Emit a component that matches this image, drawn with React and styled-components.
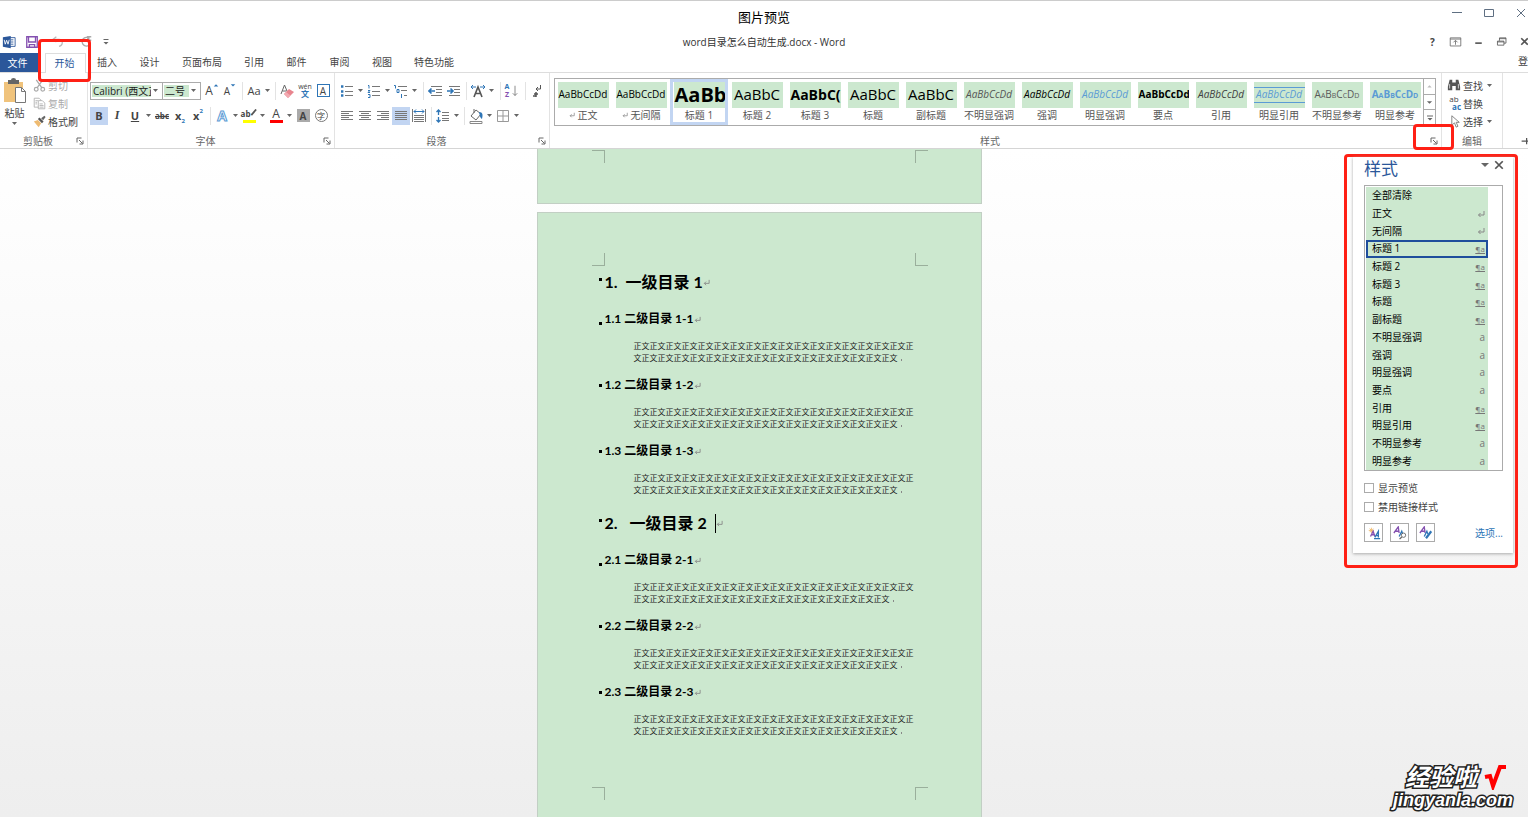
import styled, { createGlobalStyle, css } from "styled-components";

const GlobalStyle = createGlobalStyle`
  * {
    box-sizing: border-box;
  }

  html, body, #root {
    height: 100%;
  }

  body {
    margin: 0;
    overflow: hidden;
    font-family: "Open Sans", "Noto Sans CJK SC", sans-serif;
    font-size: 10px;
    color: #444;
  }

  button, input {
    font: inherit;
    color: inherit;
    padding: 0;
    margin: 0;
    border: 0;
    background: none;
  }

  p, h1, h2, h3, ul {
    margin: 0;
    padding: 0;
    font-weight: normal;
  }

  svg {
    display: block;
    flex: none;
  }
`;

const tabs = [
  { name: "插入", width: 42 },
  { name: "设计", width: 43 },
  { name: "页面布局", width: 62 },
  { name: "引用", width: 42 },
  { name: "邮件", width: 43 },
  { name: "审阅", width: 43 },
  { name: "视图", width: 42 },
  { name: "特色功能", width: 62 },
];

const gallery = [
  { name: "正文", mark: true },
  { name: "无间隔", mark: true },
  { name: "标题 1", text: "AaBb", size: 20, bold: true, selected: true },
  { name: "标题 2", text: "AaBbC", size: 15 },
  { name: "标题 3", text: "AaBbC(", size: 14, bold: true },
  { name: "标题", text: "AaBbC", size: 15 },
  { name: "副标题", text: "AaBbC", size: 15 },
  { name: "不明显强调", italic: true, color: "#555" },
  { name: "强调", italic: true },
  { name: "明显强调", italic: true, color: "#5b9bd5" },
  { name: "要点", bold: true },
  { name: "引用", italic: true, color: "#404040" },
  { name: "明显引用", italic: true, color: "#5b9bd5", lined: true },
  { name: "不明显参考", caps: true, color: "#5a5a5a" },
  { name: "明显参考", caps: true, bold: true, color: "#5b9bd5" },
];

const styleList = [
  ["全部清除", ""],
  ["正文", "return"],
  ["无间隔", "return"],
  ["标题 1", "linked"],
  ["标题 2", "linked"],
  ["标题 3", "linked"],
  ["标题", "linked"],
  ["副标题", "linked"],
  ["不明显强调", "a"],
  ["强调", "a"],
  ["明显强调", "a"],
  ["要点", "a"],
  ["引用", "linked"],
  ["明显引用", "linked"],
  ["不明显参考", "a"],
  ["明显参考", "a"],
];

const bodyText = ["正文".repeat(17) + "正", "文" + "正文".repeat(16)];
const bodyTextAlt = ["正文正" + "正文".repeat(16), "正文".repeat(16)];

const chapters = [
  {
    number: "1.",
    title: "一级目录 1",
    sections: [
      { title: "1.1 二级目录 1-1", lines: bodyText, low: true },
      { title: "1.2 二级目录 1-2", lines: bodyText },
      { title: "1.3 二级目录 1-3", lines: bodyText },
    ],
  },
  {
    number: "2.",
    title: "一级目录 2",
    wide: true,
    sections: [
      { title: "2.1 二级目录 2-1", lines: bodyTextAlt, low: true },
      { title: "2.2 二级目录 2-2", lines: bodyText },
      { title: "2.3 二级目录 2-3", lines: bodyText },
    ],
  },
];

const Icon = ({ size = 16, children, ...rest }) => (
  <svg
    width={size}
    height={size}
    viewBox="0 0 16 16"
    fill="none"
    stroke="#666"
    aria-hidden="true"
    {...rest}
  >
    {children}
  </svg>
);

const ReturnMark = ({ size = 7, color = "#888" }) => (
  <svg width={size} height={size} viewBox="0 0 8 8" fill="none" stroke={color} aria-hidden="true">
    <path d="M7 1v4H1.5M3.5 3l-2 2 2 2" />
  </svg>
);

const Down = ({ label }) => (
  <CaretButton aria-label={label}>
    <svg width="5" height="3" viewBox="0 0 5 3" aria-hidden="true">
      <path d="M0 0h5L2.5 3z" fill="#666" />
    </svg>
  </CaretButton>
);

const LinesIcon = ({ rows }) => (
  <Icon>
    {rows.map(([x, w], i) => (
      <path key={i} d={`M${x} ${3.5 + i * 2}h${w}`} stroke="#777" />
    ))}
  </Icon>
);

const ListIcon = ({ kind }) => (
  <Icon>
    <path
      d={kind === "multi" ? "M5 3.5h9M8 7.5h6M11 12.5h3" : "M6 3.5h8M6 8.5h8M6 12.5h8"}
      stroke="#777"
    />
    {kind === "bullet" && <path d="M2 3.5h2.4M2 8.5h2.4M2 12.5h2.4" stroke="#2e75b6" strokeWidth="2.4" />}
    {kind === "number" && (
      <path d="M2 2.5h1v3M2 7.5h2l-2 2h2M2 11.5h2v3H2" stroke="#2e75b6" />
    )}
    {kind === "multi" && (
      <path d="M1 2.5h1.5v3M4 6.5h2v3H4zM8.5 11v4" stroke="#2e75b6" />
    )}
  </Icon>
);

const IndentIcon = ({ right }) => (
  <Icon>
    <path d="M3 3.5h11M8 6.5h6M8 9.5h6M3 12.5h11" stroke="#777" />
    <path
      d={right ? "M1 8h6M4.5 5.5L7 8l-2.5 2.5" : "M7 8H1M3.5 5.5L1 8l2.5 2.5"}
      stroke="#2e75b6"
      strokeWidth="1.6"
    />
  </Icon>
);

const TitleBar = () => (
  <header>
    <PreviewBar>
      <span />
      <PreviewTitle>图片预览</PreviewTitle>
      <PreviewControls>
        <WindowButton aria-label="最小化">
          <Icon stroke="#5f6f82"><path d="M3 7.5h10" /></Icon>
        </WindowButton>
        <WindowButton aria-label="最大化">
          <Icon stroke="#5f6f82"><path d="M3.5 4.5h9v7h-9z" /></Icon>
        </WindowButton>
        <WindowButton aria-label="关闭">
          <Icon stroke="#5f6f82"><path d="M4 4l8 8M12 4l-8 8" /></Icon>
        </WindowButton>
      </PreviewControls>
    </PreviewBar>
    <QuickBar>
      <QuickTools>
        <Icon size={14} stroke="none">
          <path d="M8 3h7v10H8z" fill="#fff" stroke="#2b579a" />
          <path d="M10 5.500h3M10 8h3M10 10.500h3" stroke="#2b579a" />
          <path d="M1 2.500L10 1v14l-9-1.500z" fill="#2b579a" />
          <path d="M2.500 5.500l1.200 5 1.600-4.500 1.600 4.500L8.200 5.500" fill="none" stroke="#fff" />
        </Icon>
        <QuickButton aria-label="保存">
          <Icon size={14} stroke="#8450b0" strokeWidth="1.500">
            <path d="M2 2h12v12H2z" />
            <path d="M4 2v6h8V2M5 14v-3h6v3" />
          </Icon>
        </QuickButton>
        <QuickButton aria-label="撤消">
          <Icon size={14} stroke="#bbb" strokeWidth="1.500">
            <path d="M5 2L1 5l4 3M1 5h7c5 0 5 7 0 8" />
          </Icon>
        </QuickButton>
        <QuickButton aria-label="重复">
          <Icon size={14} stroke="#aaa" strokeWidth="1.500">
            <path d="M12 4a5 5 0 1 0 1 6M9 2h5M10 1v5h4" />
          </Icon>
        </QuickButton>
        <QuickButton aria-label="自定义快速访问工具栏" $narrow>
          <Icon size={8}><path d="M3 3h10" strokeWidth="2" /><path d="M3 8h10l-5 5z" fill="#666" stroke="none" /></Icon>
        </QuickButton>
      </QuickTools>
      <DocTitle>word目录怎么自动生成.docx - Word</DocTitle>
      <WordControls>
        <WindowButton $small aria-label="帮助"><b>?</b></WindowButton>
        <WindowButton $small aria-label="功能区显示选项">
          <Icon size={13}><path d="M1.500 3.500h13v10h-13zM1.500 5h13M8 12V7M5.500 9L8 6.500 10.500 9" /></Icon>
        </WindowButton>
        <WindowButton $small aria-label="最小化">
          <Icon size={13} stroke="#555"><path d="M4 10h8" strokeWidth="2" /></Icon>
        </WindowButton>
        <WindowButton $small aria-label="还原">
          <Icon size={13} stroke="#555"><path d="M3 7.500h8v5H3zM3 8.500h8M5.500 7V3.500h8V10H11M5.500 4.500h8" /></Icon>
        </WindowButton>
        <WindowButton $small aria-label="关闭文档">
          <Icon size={13} stroke="#555"><path d="M4 4l8 8M12 4l-8 8" strokeWidth="2" /></Icon>
        </WindowButton>
      </WordControls>
    </QuickBar>
    <TabBar>
      <FileTab>文件</FileTab>
      <ActiveTab>
        开始
        <TabHighlight />
      </ActiveTab>
      {tabs.map((tab) => (
        <Tab key={tab.name} $width={tab.width}>{tab.name}</Tab>
      ))}
      <SignIn href="#login">登录</SignIn>
    </TabBar>
  </header>
);

const GroupFooter = ({ name, marked }) => (
  <Footer>
    <span>{name}</span>
    <Launcher aria-label={`${name}设置`}>
      <Icon size={8} strokeWidth="2">
        <path d="M2 11V2h9M6 6l7 7M14 7v7H7" />
      </Icon>
      {marked && <LauncherHighlight />}
    </Launcher>
  </Footer>
);

const ClipboardGroup = () => (
  <Group $width={88}>
    <ClipboardBody>
      <PasteButton>
        <svg width="24" height="26" viewBox="0 0 24 26" fill="none" aria-hidden="true">
          <path d="M1 4h19v20H1z" fill="#f0c37c" />
          <path d="M5 2h3a2.500 2 0 0 1 5 0h3v4H5z" fill="#666" />
          <path d="M12.500 9.500h6l4 4v11h-10z" fill="#fff" stroke="#777" />
          <path d="M18.500 9.500v4h4" stroke="#777" />
        </svg>
        粘贴
        <svg width="5" height="3" viewBox="0 0 5 3" aria-hidden="true"><path d="M0 0h5L2.500 3z" fill="#666" /></svg>
      </PasteButton>
      <Stack>
        <StackButton $muted>
          <Icon size={13} stroke="#aaa" strokeWidth="1.500">
            <path d="M4 1l7 10M12 1L5 11" />
            <circle cx="4" cy="12.500" r="2.300" />
            <circle cx="12" cy="12.500" r="2.300" />
          </Icon>
          剪切
        </StackButton>
        <StackButton $muted>
          <Icon size={13} stroke="#aaa">
            <path d="M6.500 12.500h-5v-11h6l2 2v1" />
            <path d="M6.500 4.500h5l3 3v7h-8zM8 8.500h4M8 10.500h5M8 12.500h5M3 4.500h3M3 6.500h2M3 8.500h2" />
          </Icon>
          复制
        </StackButton>
        <StackButton>
          <Icon size={13} stroke="none">
            <path d="M1 8l5-2 4 4-3 5z" fill="#eebb72" />
            <path d="M6 5l2-2 5 5-2 2z" fill="#555" />
            <path d="M10 4l4-3 1.500 1.500-3 4z" fill="#666" />
          </Icon>
          格式刷
        </StackButton>
      </Stack>
    </ClipboardBody>
    <GroupFooter name="剪贴板" />
  </Group>
);

const FontGroup = () => (
  <Group $width={247}>
    <ToolRow>
      <Combo $width={73}>
        <input aria-label="字体" defaultValue="Calibri (西文正文)" />
        <Down label="选择字体" />
      </Combo>
      <Combo $width={38} $last>
        <input aria-label="字号" defaultValue="二号" />
        <Down label="选择字号" />
      </Combo>
      <Tool aria-label="增大字号">
        <Letter $size={12}>A</Letter>
        <Icon size={6} stroke="none"><path d="M2 12l6-6 6 6z" fill="#2e75b6" /></Icon>
      </Tool>
      <Tool aria-label="减小字号">
        <Letter $size={10}>A</Letter>
        <Icon size={6} stroke="none"><path d="M2 6l6 6 6-6z" fill="#2e75b6" /></Icon>
      </Tool>
      <Separator />
      <Tool aria-label="更改大小写"><Letter $size={11}>Aa</Letter></Tool>
      <Down label="大小写选项" />
      <Separator />
      <Tool aria-label="清除格式">
        <Icon>
          <path d="M2 11L5.500 2 8 8M3.500 8h4" stroke="#666" />
          <path d="M5 11l5-5 5 3-6 6z" fill="#e8848e" stroke="none" />
          <path d="M5 11l2-2 4.500 3.500L9 15z" fill="#f3aab1" stroke="none" />
        </Icon>
      </Tool>
      <Tool aria-label="拼音指南"><Pinyin>wén<b>文</b></Pinyin></Tool>
      <Tool aria-label="字符边框"><BoxedLetter>A</BoxedLetter></Tool>
    </ToolRow>
    <ToolRow>
      <Tool $on aria-label="加粗"><Letter $size={11} $bold>B</Letter></Tool>
      <Tool aria-label="倾斜"><Letter $size={12} $serif $bold><i>I</i></Letter></Tool>
      <Tool aria-label="下划线"><Letter $size={11} $bold><u>U</u></Letter></Tool>
      <Down label="下划线样式" />
      <Tool aria-label="删除线"><Letter $size={8} $bold><s>abc</s></Letter></Tool>
      <Tool aria-label="下标"><Letter $size={11} $bold>x</Letter><Script $low>2</Script></Tool>
      <Tool aria-label="上标"><Letter $size={11} $bold>x</Letter><Script>2</Script></Tool>
      <Separator />
      <Tool aria-label="文本效果"><OutlineLetter>A</OutlineLetter></Tool>
      <Down label="文本效果选项" />
      <Tool aria-label="突出显示"><Barred $color="#ffff00" $small>ab<Icon size={7} stroke="#555" strokeWidth="4"><path d="M14 1L3 14" /></Icon></Barred></Tool>
      <Down label="突出显示颜色" />
      <Tool aria-label="字体颜色"><Barred $color="#ff0000">A</Barred></Tool>
      <Down label="选择字体颜色" />
      <Tool aria-label="字符底纹"><BoxedLetter $shade>A</BoxedLetter></Tool>
      <Tool aria-label="带圈字符"><BoxedLetter $round>字</BoxedLetter></Tool>
    </ToolRow>
    <GroupFooter name="字体" />
  </Group>
);

const full = [[2, 12], [2, 12], [2, 12], [2, 12], [2, 12]];

const ParagraphGroup = () => (
  <Group $width={215}>
    <ToolRow $indent>
      <Tool aria-label="项目符号"><ListIcon kind="bullet" /></Tool>
      <Down label="项目符号选项" />
      <Tool aria-label="编号"><ListIcon kind="number" /></Tool>
      <Down label="编号选项" />
      <Tool aria-label="多级列表"><ListIcon kind="multi" /></Tool>
      <Down label="多级列表选项" />
      <Separator $wide />
      <Tool aria-label="减少缩进量"><IndentIcon /></Tool>
      <Tool aria-label="增加缩进量"><IndentIcon right /></Tool>
      <Separator />
      <Tool aria-label="中文版式">
        <Icon>
          <path d="M4 14L8 4l4 10M5.500 10.500h5" stroke="#555" strokeWidth="1.600" />
          <path d="M1 4h5M3 2L1 4l2 2M15 4h-5M13 2l2 2-2 2" stroke="#2e75b6" />
        </Icon>
      </Tool>
      <Down label="中文版式选项" />
      <Separator $wide />
      <Tool aria-label="排序">
        <SortLetters><span>A</span><span>Z</span></SortLetters>
        <Icon size={12} viewBox="4 0 8 16"><path d="M8 1v13M5 11l3 3 3-3" /></Icon>
      </Tool>
      <Separator />
      <Tool aria-label="显示编辑标记">
        <Icon stroke="#555">
          <path d="M11.500 2v4H7M9 4L7 6l2 2" />
          <path d="M7 9v5M5 11h4M4 13h3" strokeWidth="1.500" />
        </Icon>
      </Tool>
    </ToolRow>
    <ToolRow $indent>
      <Tool aria-label="左对齐"><LinesIcon rows={[[2, 12], [2, 8], [2, 12], [2, 8], [2, 12]]} /></Tool>
      <Tool aria-label="居中"><LinesIcon rows={[[2, 12], [4, 8], [2, 12], [4, 8], [2, 12]]} /></Tool>
      <Tool aria-label="右对齐"><LinesIcon rows={[[2, 12], [6, 8], [2, 12], [6, 8], [2, 12]]} /></Tool>
      <Tool $on aria-label="两端对齐"><LinesIcon rows={full} /></Tool>
      <Tool aria-label="分散对齐">
        <Icon>
          <path d="M1.500 1v13M14.500 1v13" stroke="#777" />
          <path d="M3 3.500h10M5 1.500l-2 2 2 2M11 1.500l2 2-2 2" stroke="#2e75b6" />
          <path d="M3 7.500h10M3 9.500h10M3 11.500h10M3 13.500h10" stroke="#777" />
        </Icon>
      </Tool>
      <Separator />
      <Tool aria-label="行距">
        <Icon>
          <path d="M3.500 2v5M1.500 4l2-2 2 2M3.500 9v5M1.500 12l2 2 2-2" stroke="#2e75b6" strokeWidth="1.300" />
          <path d="M7 4.500h7M7 7.500h7M7 10.500h7M7 12.500h7" stroke="#777" />
        </Icon>
      </Tool>
      <Down label="行距选项" />
      <Separator />
      <Tool aria-label="底纹">
        <Icon>
          <path d="M8 2L3 8l5 4 5-6zM6 5V1" stroke="#666" />
          <path d="M11 4c4 0 4 3 3 7-2-1-2-3-3-7z" fill="#2e75b6" stroke="none" />
          <path d="M2 13.500h12v2H2z" stroke="#888" />
        </Icon>
      </Tool>
      <Down label="底纹颜色" />
      <Tool aria-label="边框">
        <Icon stroke="#999"><path d="M2.500 2.500h11v11h-11zM8 2.500v11M2.500 8h11" /></Icon>
      </Tool>
      <Down label="边框选项" />
    </ToolRow>
    <GroupFooter name="段落" />
  </Group>
);

const StylesGroup = () => (
  <StyleGroup>
    <Gallery>
      <GalleryItems>
        {gallery.map((item) => (
          <GalleryItem key={item.name} $selected={item.selected}>
            <Swatch>
              <Sample
                $size={item.size}
                $bold={item.bold}
                $italic={item.italic}
                $color={item.color}
                $caps={item.caps}
                $lined={item.lined}
              >
                {item.text || "AaBbCcDd"}
              </Sample>
            </Swatch>
            <GalleryName>
              {item.mark && <ReturnMark size={6} />}
              {item.name}
            </GalleryName>
          </GalleryItem>
        ))}
      </GalleryItems>
      <GalleryScroll>
        <ScrollButton aria-label="上一行" disabled>
          <Icon size={7} stroke="none"><path d="M3 10h10L8 5z" fill="#bbb" /></Icon>
        </ScrollButton>
        <ScrollButton aria-label="下一行">
          <Icon size={7} stroke="none"><path d="M2 5h12l-6 6z" fill="#666" /></Icon>
        </ScrollButton>
        <ScrollButton aria-label="其他">
          <Icon size={8}><path d="M2 4h12" strokeWidth="2" /><path d="M3 8h10l-5 5z" fill="#666" stroke="none" /></Icon>
        </ScrollButton>
      </GalleryScroll>
    </Gallery>
    <GroupFooter name="样式" marked />
  </StyleGroup>
);

const EditGroup = () => (
  <Group $width={61}>
    <EditStack>
      <StackButton>
        <Icon size={14} stroke="none">
          <path d="M3 2h3v3h4V2h3l2 8v4h-5v-5H6v5H1v-4z" fill="#555" />
          <path d="M3 7v5M13 7v5" stroke="#ddd" />
        </Icon>
        查找
        <Down label="查找选项" />
      </StackButton>
      <StackButton>
        <ReplaceLetters><span>ab</span><b>ac</b></ReplaceLetters>
        替换
      </StackButton>
      <StackButton>
        <Icon size={14}><path d="M5.500 2v11l3-3 2 5 2-1-2-4.500h3.500z" stroke="#777" /></Icon>
        选择
        <Down label="选择选项" />
      </StackButton>
    </EditStack>
    <Footer><span>编辑</span></Footer>
  </Group>
);

const CornerRow = ({ top }) => (
  <Corners>
    <Corner $top={top} />
    <Corner $top={top} $right />
  </Corners>
);

const Documents = () => (
  <Workspace>
    <PageTail>
      <CornerRow top />
    </PageTail>
    <Page>
      <CornerRow />
      <Content>
        {chapters.map((chapter) => (
          <section key={chapter.number}>
            <ChapterTitle>
              <Bullet $raised />
              <ChapterNumber $wide={chapter.wide}>{chapter.number}</ChapterNumber>
              {chapter.title}
              {chapter.wide && <TextCursor />}
              <ReturnMark />
            </ChapterTitle>
            {chapter.sections.map((section) => (
              <div key={section.title}>
                <SectionTitle>
                  <Bullet $low={section.low} />
                  {section.title}
                  <ReturnMark />
                </SectionTitle>
                <Paragraph>
                  {section.lines[0]}
                  <br />
                  {section.lines[1]}
                  <EndMark />
                </Paragraph>
              </div>
            ))}
          </section>
        ))}
      </Content>
      <CornerRow top />
    </Page>
  </Workspace>
);

const StylePane = () => (
  <PaneFrame>
    <Pane>
      <PaneHeader>
        <h2>样式</h2>
        <PaneButton aria-label="窗格选项">
          <svg width="8" height="4" viewBox="0 0 8 4" aria-hidden="true"><path d="M0 0h8L4 4z" fill="#666" /></svg>
        </PaneButton>
        <PaneButton aria-label="关闭窗格">
          <Icon size={12} stroke="#555" strokeWidth="2.300"><path d="M3 3l10 10M13 3L3 13" /></Icon>
        </PaneButton>
      </PaneHeader>
      <StyleItems>
        {styleList.map(([name, kind]) => (
          <li key={name}>
            <StyleItem $selected={name === "标题 1"}>
              {name}
              {kind === "return" && <ReturnMark size={8} />}
              {kind === "linked" && <Kind $linked>¶a</Kind>}
              {kind === "a" && <Kind>a</Kind>}
            </StyleItem>
          </li>
        ))}
      </StyleItems>
      <Check><input type="checkbox" />显示预览</Check>
      <Check><input type="checkbox" />禁用链接样式</Check>
      <PaneFooter>
        <PaneTool aria-label="新建样式">
          <Icon size={14}>
            <path d="M2 5h6M5 2v6M3 3l4 4M7 3L3 7" stroke="#efb869" />
            <path d="M4 12l3-6 2 6M5 10h4" stroke="#8450b0" strokeWidth="1.500" />
            <path d="M9 13l4-7v7M10 11h3M8 14.500h7" stroke="#2e75b6" strokeWidth="1.500" />
          </Icon>
        </PaneTool>
        <PaneTool aria-label="样式检查器">
          <Icon size={14}>
            <path d="M1 8l5-7 1 7M3 6h4" stroke="#8450b0" strokeWidth="1.500" />
            <path d="M7 12l3-6 1 3" stroke="#2e75b6" strokeWidth="1.500" />
            <circle cx="12" cy="10.500" r="2.500" />
            <path d="M10 12.500L7.500 15" strokeWidth="1.500" />
          </Icon>
        </PaneTool>
        <PaneTool aria-label="管理样式">
          <Icon size={14}>
            <path d="M1 8l5-7 1 7M3 6h4" stroke="#8450b0" strokeWidth="1.500" />
            <path d="M6 12l3-6 1 3" stroke="#2e75b6" strokeWidth="1.500" />
            <path d="M8 14l6-8" stroke="#2e75b6" strokeWidth="2.500" />
          </Icon>
        </PaneTool>
        <a href="#options">选项...</a>
      </PaneFooter>
    </Pane>
  </PaneFrame>
);

const App = () => {
  return (
    <Window>
      <GlobalStyle />
      <TitleBar />
      <Ribbon>
        <ClipboardGroup />
        <FontGroup />
        <ParagraphGroup />
        <StylesGroup />
        <EditGroup />
        <PinButton aria-label="固定功能区">
          <Icon size={10} stroke="#555" strokeWidth="2"><path d="M1 8h8M9 3v10M10 8h6" /></Icon>
        </PinButton>
      </Ribbon>
      <Main>
        <Documents />
        <StylePane />
        <Watermark>
          <WatermarkTop>
            经验啦
            <svg width="24" height="26" viewBox="0 0 24 26" fill="none" aria-hidden="true">
              <path d="M2 13l5-1 3 10L17 3h6" stroke="#f00" strokeWidth="4" />
            </svg>
          </WatermarkTop>
          <WatermarkUrl>jingyanla.com</WatermarkUrl>
        </Watermark>
      </Main>
    </Window>
  );
};

export default App;

const Window = styled.div`
  height: 100%;
  display: flex;
  flex-direction: column;
  overflow: hidden;
  background: #fff;
  border-top: 1px solid #ccc;
`;

const PreviewBar = styled.div`
  display: grid;
  grid-template-columns: 1fr auto 1fr;
  height: 31px;
  align-items: center;
`;

const PreviewTitle = styled.h1`
  font-size: 13px;
  line-height: 18px;
  color: #000;
`;

const PreviewControls = styled.div`
  display: flex;
  justify-content: flex-end;
  align-self: start;
  margin-right: -9px;
`;

const WindowButton = styled.button`
  display: flex;
  align-items: center;
  justify-content: center;
  width: ${({ $small }) => ($small ? "23px" : "32px")};
  height: ${({ $small }) => ($small ? "18px" : "24px")};
`;

const QuickBar = styled.div`
  display: grid;
  grid-template-columns: 1fr auto 1fr;
  height: 21px;
  padding-bottom: 2px;
  align-items: center;
`;

const QuickTools = styled.div`
  display: flex;
  align-items: center;
  gap: 9px;
  padding-left: 2px;
`;

const QuickButton = styled.button`
  width: ${({ $narrow }) => ($narrow ? "8px" : "18px")};
  margin-left: ${({ $narrow }) => ($narrow ? "-4px" : "0")};
  display: flex;
`;

const DocTitle = styled.h2`
  font-size: 10px;
  color: #333;
`;

const WordControls = styled.div`
  display: flex;
  justify-content: flex-end;
  margin-right: -8px;
`;

const TabBar = styled.nav`
  display: flex;
  height: 20px;
  border-bottom: 1px solid #ddd;
`;

const Tab = styled.button`
  width: ${({ $width }) => $width}px;
  height: 17px;
  color: #444;
`;

const FileTab = styled.button`
  width: 41px;
  padding: 0 6px 1px 0;
  background: #2b579a;
  color: #fff;
`;

const ActiveTab = styled.button`
  position: relative;
  width: 41px;
  height: 20px;
  margin-left: 4px;
  padding: 0 2px 3px 0;
  color: #2b579a;
  background: #fff;
  border: 1px solid #ddd;
  border-bottom: 0;
`;

const highlight = css`
  position: absolute;
  border: 3px solid #ff2015;
  border-radius: 4px;
  pointer-events: none;
  z-index: 2;
`;

const TabHighlight = styled.span`
  ${highlight}
  inset: -15px -6px -9px -8px;
`;

const SignIn = styled.a`
  flex: none;
  width: 10px;
  margin-left: auto;
  overflow: hidden;
  white-space: nowrap;
  color: #444;
  text-decoration: none;
`;

const Ribbon = styled.div`
  display: flex;
  height: 76px;
  flex: none;
  border-bottom: 1px solid #d5d5d5;
`;

const Group = styled.section`
  display: flex;
  flex-direction: column;
  flex: none;
  width: ${({ $width }) => $width}px;
  padding-top: 5px;
  border-right: 1px solid #e3e3e3;
`;

const StyleGroup = styled(Group)`
  flex: 1;
  min-width: 0;
  width: auto;
`;

const Footer = styled.footer`
  display: flex;
  align-items: center;
  height: 15px;
  margin-top: auto;
  color: #666;

  & > span {
    flex: 1;
    text-align: center;
  }
`;

const Launcher = styled.button`
  position: relative;
  width: 10px;
  margin-right: 1px;
`;

const LauncherHighlight = styled.span`
  ${highlight}
  inset: -13px -14px -5px -17px;
`;

const ClipboardBody = styled.div`
  display: flex;
`;

const PasteButton = styled.button`
  display: flex;
  flex-direction: column;
  align-items: center;
  width: 32px;
  padding-right: 3px;
  line-height: 14px;
  gap: 2px;
`;

const Stack = styled.div`
  display: flex;
  flex-direction: column;
  margin-top: -2px;
`;

const StackButton = styled.button`
  display: flex;
  align-items: center;
  gap: 2px;
  height: 18px;
  padding-left: 1px;
  white-space: nowrap;
  color: ${({ $muted }) => ($muted ? "#aaa" : "#444")};
`;

const EditStack = styled(Stack)`
  padding-left: 4px;
`;

const ToolRow = styled.div`
  display: flex;
  align-items: center;
  height: 25px;
  margin-left: ${({ $indent }) => ($indent ? "3px" : "2px")};
`;

const Tool = styled.button`
  display: flex;
  align-items: center;
  justify-content: center;
  flex: none;
  width: 18px;
  height: 18px;
  background: ${({ $on }) => ($on ? "#c2d5f2" : "transparent")};
`;

const CaretButton = styled.span`
  display: flex;
  align-items: center;
  justify-content: center;
  flex: none;
  width: 9px;
  height: 18px;
`;

const Separator = styled.span`
  flex: none;
  width: 1px;
  height: 18px;
  margin: ${({ $wide }) => ($wide ? "0 3px 0 4px" : "0 2px 0 3px")};
  background: #e3e3e3;
`;

const Combo = styled.div`
  display: flex;
  align-items: center;
  flex: none;
  width: ${({ $width }) => $width}px;
  height: 18px;
  padding: 1px 2px 1px 1px;
  border: 1px solid #ababab;
  margin-right: ${({ $last }) => ($last ? "2px" : "0")};
  ${({ $last }) => $last && "border-left: 0;"}

  & input {
    flex: 1;
    min-width: 0;
    height: 12px;
    padding-left: 1px;
    background: #cce8cf;
    color: #222;
    font-size: 10px;
  }
`;

const Letter = styled.span`
  font-size: ${({ $size }) => $size}px;
  font-weight: ${({ $bold }) => ($bold ? 700 : 400)};
  font-family: ${({ $serif }) => ($serif ? '"Liberation Serif", serif' : "inherit")};
  color: #444;

  & + svg {
    align-self: flex-start;
  }
`;

const Script = styled.span`
  align-self: ${({ $low }) => ($low ? "flex-end" : "flex-start")};
  font-size: 6px;
  line-height: 8px;
  font-weight: bold;
  color: #2e75b6;
`;

const Pinyin = styled.span`
  display: flex;
  flex-direction: column;
  align-items: center;
  font-size: 7px;
  line-height: 7px;

  & b {
    font-size: 8px;
    line-height: 8px;
    color: #2e75b6;
  }
`;

const BoxedLetter = styled.span`
  display: flex;
  align-items: center;
  justify-content: center;
  width: 13px;
  height: 13px;
  font-size: 10px;
  border: 1px solid #2e75b6;
  ${({ $shade }) =>
    $shade &&
    css`
      background: #aaa;
      border-color: #aaa;
      font-weight: bold;
    `}
  ${({ $round }) =>
    $round &&
    css`
      border-color: #777;
      border-radius: 50%;
      font-size: 8px;
    `}
`;

const OutlineLetter = styled.span`
  font-size: 14px;
  font-weight: bold;
  color: #fff;
  -webkit-text-stroke: 1px #5b9bd5;
`;

const Barred = styled.span`
  display: flex;
  justify-content: center;
  width: 13px;
  height: 14px;
  border-bottom: 3px solid ${({ $color }) => $color};
  font-size: ${({ $small }) => ($small ? "8px" : "12px")};
  line-height: 10px;
  font-weight: ${({ $small }) => ($small ? 700 : 400)};
`;

const SortLetters = styled.span`
  display: flex;
  flex-direction: column;
  font-size: 7px;
  line-height: 8px;
  font-weight: bold;
  color: #2e75b6;

  & span + span {
    color: #8450b0;
  }
`;

const ReplaceLetters = styled.span`
  display: flex;
  flex-direction: column;
  width: 14px;
  font-size: 8px;
  line-height: 8px;

  & b {
    align-self: flex-end;
    color: #2e75b6;
  }
`;

const Gallery = styled.div`
  display: flex;
  height: 48px;
  margin: 0 5px 0 4px;
  border: 1px solid #ababab;
`;

const GalleryItems = styled.div`
  display: flex;
  flex: 1;
  min-width: 0;
  overflow: hidden;
  margin-left: -1px;
`;

const GalleryItem = styled.button`
  display: flex;
  flex-direction: column;
  align-items: center;
  flex: none;
  width: 58px;
  height: 46px;
  border: 3px solid ${({ $selected }) => ($selected ? "#c2d5f2" : "transparent")};
`;

const Swatch = styled.span`
  display: flex;
  align-items: center;
  width: 51px;
  height: 26px;
  overflow: hidden;
  background: #cce8cf;
`;

const Sample = styled.span`
  flex: none;
  min-width: 51px;
  padding: 0 1px 2px;
  white-space: nowrap;
  font-size: ${({ $size }) => $size || 10}px;
  font-weight: ${({ $bold }) => ($bold ? 700 : 400)};
  font-style: ${({ $italic }) => ($italic ? "italic" : "normal")};
  font-variant: ${({ $caps }) => ($caps ? "small-caps" : "normal")};
  color: ${({ $color }) => $color || "#000"};
  ${({ $lined }) =>
    $lined &&
    css`
      line-height: 12px;
      border-top: 1px solid #5b9bd5;
      border-bottom: 1px solid #5b9bd5;
    `}
`;

const GalleryName = styled.span`
  display: flex;
  align-items: center;
  gap: 3px;
  line-height: 14px;
  white-space: nowrap;
  color: #555;
`;

const GalleryScroll = styled.div`
  display: flex;
  flex-direction: column;
  flex: none;
  width: 12px;
  border-left: 1px solid #ababab;
`;

const ScrollButton = styled.button`
  display: flex;
  flex: 1;
  align-items: center;
  justify-content: center;

  & + & {
    border-top: 1px solid #ababab;
  }
`;

const PinButton = styled.button`
  flex: none;
  align-self: flex-end;
  width: 25px;
  height: 15px;
  padding-left: 18px;
  overflow: hidden;
`;

const Main = styled.main`
  position: relative;
  flex: 1;
  min-height: 0;
  background: linear-gradient(#fff, #eee);
`;

const Workspace = styled.div`
  display: flex;
  flex-direction: column;
  align-items: center;
  gap: 8px;
  height: 100%;
  padding-right: 10px;
  overflow: hidden;
`;

const PageTail = styled.div`
  flex: none;
  width: 445px;
  height: 55px;
  padding: 1px 53px 0 54px;
  background: #cce8cf;
  border: 1px solid #c2cfc4;
  border-top: 0;
`;

const Page = styled.article`
  flex: none;
  width: 445px;
  padding: 40px 53px 60px 54px;
  background: #cce8cf;
  border: 1px solid #c2cfc4;
  color: #000;
`;

const Corners = styled.div`
  display: flex;
  justify-content: space-between;
`;

const Corner = styled.span`
  width: 13px;
  height: 13px;
  border: 0 solid #9aaf9c;
  ${({ $top }) => ($top ? "border-top-width: 1px;" : "border-bottom-width: 1px;")}
  ${({ $right }) => ($right ? "border-left-width: 1px;" : "border-right-width: 1px;")}
`;

const Content = styled.div`
  padding: 4px 0 50px 7px;
`;

const ChapterTitle = styled.h2`
  display: flex;
  align-items: center;
  height: 24px;
  margin-bottom: 15px;
  font: bold 16px/24px Lato, "Noto Sans CJK SC", sans-serif;
  white-space: pre;

  section + section > & {
    margin-top: 15px;
  }
`;

const ChapterNumber = styled.span`
  width: ${({ $wide }) => ($wide ? "25px" : "21px")};
`;

const SectionTitle = styled.h3`
  display: flex;
  align-items: center;
  height: 20px;
  margin-top: 11px;
  font: bold 12px/20px Lato, "Noto Sans CJK SC", sans-serif;
  white-space: pre;
`;

const Bullet = styled.span`
  width: 3px;
  height: 3px;
  margin-right: 3px;
  background: #000;
  ${({ $raised }) => $raised && "margin-bottom: 5px;"}
  ${({ $low }) => $low && "margin-top: 9px;"}
`;

const TextCursor = styled.span`
  width: 1px;
  height: 19px;
  margin-left: 8px;
  background: #000;
`;

const Paragraph = styled.p`
  margin-top: 11px;
  padding-left: 35px;
  font: 8px/12px "Noto Sans CJK SC", sans-serif;
  white-space: nowrap;
  color: #222;
`;

const EndMark = styled.span`
  display: inline-block;
  width: 1px;
  height: 2px;
  margin-left: 3px;
  background: #888;
`;

const PaneFrame = styled.div`
  ${highlight}
  top: 5px;
  right: 10px;
  width: 174px;
  padding: 0 2px 12px 6px;
  pointer-events: auto;
`;

const Pane = styled.aside`
  padding: 1px 10px 11px 11px;
  background: #fff;
  box-shadow: 0 1px 3px #aaa;
`;

const PaneHeader = styled.header`
  display: flex;
  height: 27px;
  margin-right: -3px;

  & h2 {
    flex: 1;
    font-size: 17px;
    line-height: 22px;
    color: #2b579a;
  }
`;

const PaneButton = styled.button`
  display: flex;
  align-items: center;
  justify-content: center;
  width: 14px;
  height: 14px;
`;

const StyleItems = styled.ul`
  display: grid;
  grid-template-rows: repeat(16, minmax(0, 1fr));
  height: 286px;
  margin-bottom: 7px;
  padding: 1px 14px 0 1px;
  list-style: none;
  border: 1px solid #ababab;
`;

const StyleItem = styled.button`
  display: flex;
  align-items: center;
  justify-content: space-between;
  width: 100%;
  height: 100%;
  padding: 0 1px 0 4px;
  line-height: 13px;
  background: #cce8cf;
  color: #000;
  border: 2px solid ${({ $selected }) => ($selected ? "#1f4e9c" : "#cce8cf")};
`;

const Kind = styled.span`
  color: #777;
  font-size: ${({ $linked }) => ($linked ? "8px" : "10px")};
  text-decoration: ${({ $linked }) => ($linked ? "underline" : "none")};
`;

const Check = styled.label`
  display: flex;
  align-items: center;
  gap: 4px;
  height: 19px;

  & input {
    appearance: none;
    width: 10px;
    height: 10px;
    border: 1px solid #ababab;
    background: #fff;
  }
`;

const PaneFooter = styled.footer`
  display: flex;
  align-items: center;
  gap: 7px;
  margin-top: 7px;

  & a {
    margin-left: auto;
    color: #2e75b6;
    text-decoration: none;
  }
`;

const PaneTool = styled.button`
  display: flex;
  align-items: center;
  justify-content: center;
  width: 19px;
  height: 19px;
  border: 1px solid #ababab;
`;

const Watermark = styled.div`
  position: absolute;
  right: 15px;
  bottom: 7px;
  display: flex;
  flex-direction: column;
  align-items: flex-end;
  color: #fff;
  -webkit-text-stroke: 3px #222;
  paint-order: stroke fill;
`;

const WatermarkTop = styled.div`
  display: flex;
  gap: 6px;
  margin-right: 6px;
  font: italic 700 24px/24px "Noto Sans CJK SC", sans-serif;
`;

const WatermarkUrl = styled.div`
  font: italic 700 18px/20px "Liberation Sans", sans-serif;
`;
